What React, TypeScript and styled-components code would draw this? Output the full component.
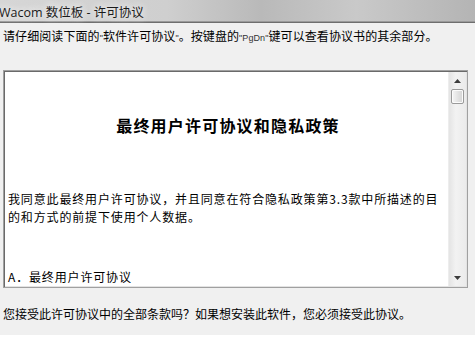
import React from "react";
import styled, { createGlobalStyle } from "styled-components";

const Global = createGlobalStyle`
  html, body { margin: 0; padding: 0; background: #ffffff; }
  body { font-family: "Noto Sans CJK SC", "Noto Sans", sans-serif; }
`;

const Window = styled.div`
  width: 475px;
  height: 349px;
  display: flex;
  flex-direction: column;
  background: #ffffff;
  overflow: hidden;
`;

const TitleBar = styled.div`
  height: 22px;
  flex: none;
  display: flex;
  align-items: center;
  background: linear-gradient(90deg, #d6d6d6 0%, #cfcfcf 35%, #b9b9b9 55%, #c9c9c9 75%, #b4b4b4 100%);
  border-bottom: 1px solid #6e6e6e;
  box-shadow: inset 0 -1px 0 #9a9a9a;
`;

const TitleText = styled.span`
  font-family: "Open Sans", "Noto Sans CJK SC", sans-serif;
  font-size: 12.5px;
  color: #1a1a1a;
  margin-left: -1px;
  text-shadow: 0 0 6px #f4f4f4, 0 0 8px #eeeeee;
  white-space: nowrap;
`;

const Panel = styled.div`
  height: 312px;
  flex: none;
  background: #f0f0f0;
  display: flex;
  flex-direction: column;
`;

const Instruction = styled.div`
  margin: 4px 0 0 3px;
  font-size: 12px;
  line-height: 17px;
  letter-spacing: 0.08px;
  color: #000;
  white-space: nowrap;
`;

const SmallQuote = styled.span`
  font-family: "Liberation Sans", sans-serif;
  font-size: 9px;
  color: #333;
`;

const Box = styled.div`
  margin: 23px 0 0 3px;
  width: 465px;
  height: 218px;
  box-sizing: border-box;
  border: 1px solid #a0a0a0;
  box-shadow: inset 1px 1px 0 #6a6a6a, inset -1px -1px 0 #e3e3e3;
  background: #ffffff;
  display: flex;
  padding: 1px;
  overflow: hidden;
`;

const Content = styled.div`
  flex: 1;
  padding: 0 0 0 3px;
  overflow: hidden;
  color: #000;
`;

const Heading = styled.div`
  margin-top: 41px;
  text-align: center;
  font-size: 16px;
  font-weight: bold;
  line-height: 24px;
  letter-spacing: 1.2px;
`;

const Para = styled.div`
  margin-top: 53px;
  font-size: 12px;
  line-height: 18px;
  letter-spacing: 0.85px;
`;

const Line = styled.div`
  white-space: nowrap;
`;

const Section = styled.div`
  margin-top: 42px;
  font-size: 12px;
  line-height: 18px;
  letter-spacing: 0.85px;
  white-space: nowrap;
`;

const Scrollbar = styled.div`
  width: 17px;
  flex: none;
  background: linear-gradient(90deg, #e4e4e4, #f2f2f2 40%, #ebebeb);
  border-left: 1px solid #ededed;
  display: flex;
  flex-direction: column;
  align-items: center;
`;

const Arrow = styled.div`
  width: 17px;
  height: 17px;
  flex: none;
  display: flex;
  align-items: center;
  justify-content: center;
`;

const Thumb = styled.div`
  width: 13px;
  height: 15px;
  box-sizing: border-box;
  border: 1px solid #9a9a9a;
  border-radius: 2px;
  background: linear-gradient(90deg, #f6f6f6, #e2e2e2 55%, #d4d4d4);
  box-shadow: inset 0 0 0 1px #fbfbfb;
`;

const Track = styled.div`
  flex: 1;
`;

const Footer = styled.div`
  margin: 17px 0 0 3px;
  font-size: 12px;
  line-height: 17px;
  color: #000;
  white-space: nowrap;
`;

export default function App() {
  return (
    <Window>
      <Global />
      <TitleBar>
        <TitleText>Wacom 数位板 - 许可协议</TitleText>
      </TitleBar>
      <Panel>
        <Instruction>
          请仔细阅读下面的<SmallQuote>"</SmallQuote>软件许可协议<SmallQuote>"</SmallQuote>。按键盘的
          <SmallQuote>"PgDn"</SmallQuote>键可以查看协议书的其余部分。
        </Instruction>
        <Box>
          <Content>
            <Heading>最终用户许可协议和隐私政策</Heading>
            <Para>
              <Line>我同意此最终用户许可协议，并且同意在符合隐私政策第3.3款中所描述的目</Line>
              <Line>的和方式的前提下使用个人数据。</Line>
            </Para>
            <Section>A．最终用户许可协议</Section>
          </Content>
          <Scrollbar>
            <Arrow>
              <svg width="7" height="4" viewBox="0 0 7 4">
                <path d="M3.5 0 L7 4 L0 4 Z" fill="#3c3c3c" />
              </svg>
            </Arrow>
            <Thumb />
            <Track />
            <Arrow>
              <svg width="7" height="4" viewBox="0 0 7 4">
                <path d="M0 0 L7 0 L3.5 4 Z" fill="#3c3c3c" />
              </svg>
            </Arrow>
          </Scrollbar>
        </Box>
        <Footer>您接受此许可协议中的全部条款吗？如果想安装此软件，您必须接受此协议。</Footer>
      </Panel>
    </Window>
  );
}
